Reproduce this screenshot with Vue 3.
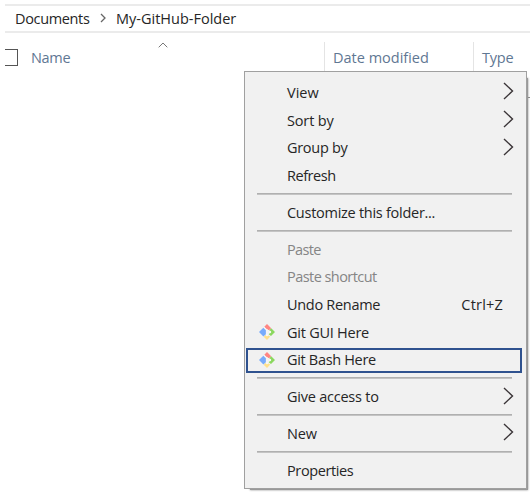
<script setup>
const groups = [
  [
    { label: 'View', arrow: true, ls: 0 },
    { label: 'Sort by', arrow: true, ls: -0.15 },
    { label: 'Group by', arrow: true, ls: -0.3 },
    { label: 'Refresh', ls: -0.45 },
  ],
  [{ label: 'Customize this folder...', ls: -0.27 }],
  [
    { label: 'Paste', disabled: true, ls: -0.65 },
    { label: 'Paste shortcut', disabled: true, ls: -0.55 },
    { label: 'Undo Rename', shortcut: 'Ctrl+Z', ls: -0.3 },
    { label: 'Git GUI Here', git: true, ls: -0.25 },
    { label: 'Git Bash Here', git: true, active: true, ls: -0.32 },
  ],
  [{ label: 'Give access to', arrow: true, ls: -0.23 }],
  [{ label: 'New', arrow: true, ls: -0.1 }],
  [{ label: 'Properties', ls: -0.38 }],
]
</script>

<template>
  <main class="explorer">
    <nav class="path">
      <span class="docs">Documents</span>
      <svg class="crumb" viewBox="0 0 6 10"><path d="M1 1l4 4-4 4" /></svg>
      <span class="folder">My-GitHub-Folder</span>
    </nav>
    <header class="columns">
      <div class="col name">
        <i class="check"></i><span>Name</span>
        <svg class="sort" viewBox="0 0 10 6"><path d="M.7 5.3L5 1l4.300 4.300" /></svg>
      </div>
      <div class="col date">Date modified</div>
      <div class="col type">Type</div>
    </header>
    <i class="tick"></i>
    <div class="shadow"></div>
    <div class="menu" role="menu">
      <section v-for="(g, i) in groups" :key="i" class="group">
        <div
          v-for="item in g"
          :key="item.label"
          class="row"
          :class="{ disabled: item.disabled, active: item.active }"
          role="menuitem"
        >
          <span class="icon">
            <svg v-if="item.git" viewBox="0 0 16 16">
              <path fill="#ff8583" d="M8 0l4.200 4.200L10 6.300 8.200 5.600 5.300 2.700z" />
              <path fill="#78abfb" d="M4.300 3.700l2.600 2.600v4L4.400 12.400 0 8z" />
              <path fill="#8bd85f" d="M12.200 4.200L16 8l-4 4-2.300-1.800L12 8l-1.700-1.700z" />
              <path fill="#ffe08a" d="M7.300 10.500l4 2L8 16l-3.300-3.300z" />
              <path d="M5 3l3 3v5M8 5.500l3 2.500" fill="none" stroke="#f7f7f4" stroke-width="1" />
              <circle cx="8" cy="11" r="1.200" fill="#f7f7f4" />
              <circle cx="11" cy="8" r="1.200" fill="#f7f7f4" />
            </svg>
          </span>
          <span class="label" :style="{ letterSpacing: item.ls + 'px' }">{{ item.label }}</span>
          <span v-if="item.shortcut" class="keys">{{ item.shortcut }}</span>
          <svg v-if="item.arrow" class="arrow" viewBox="0 0 11 18">
            <path d="M1 1l8.500 8L1 17" />
          </svg>
        </div>
      </section>
    </div>
  </main>
</template>

<style>
body { margin: 0; background: #fff; }
</style>

<style scoped>
.explorer {
  position: relative;
  width: 530px;
  height: 494px;
  overflow: hidden;
  box-sizing: border-box;
  padding: 4px 0 0 5px;
  background: #fff;
  font: 14.5px/20px "Open Sans", "Noto Sans", sans-serif;
  color: #262626;
}
.path {
  display: flex;
  align-items: center;
  box-sizing: border-box;
  height: 29px;
  padding-left: 10px;
  border-top: 2px solid #ebebeb;
  border-bottom: 2px solid #ebebeb;
  white-space: nowrap;
}
.docs { width: 85px; letter-spacing: -0.35px; }
.crumb { width: 6px; height: 10px; margin: -1px 10px 0 0; fill: none; stroke: #666; stroke-width: 1.300; }
.columns { display: flex; height: 50px; color: #5f7793; }
.col { box-sizing: border-box; margin-top: 9px; padding: 6px 0 0 7px; border-left: 1px solid #e4e4e4; white-space: nowrap; }
.name { display: flex; width: 319px; padding-left: 0; border: 0; letter-spacing: -0.3px; }
.date { width: 149px; padding-left: 8px; }
.type { width: 57px; padding-left: 8px; letter-spacing: -0.2px; }
.check { box-sizing: border-box; width: 13px; height: 17px; margin: 1px 13px 0 0; border: 1px solid #555; border-left: 0; }
.sort { width: 10px; height: 6px; margin: -6px 0 0 88px; fill: none; stroke: #777; }
.tick { position: absolute; left: 526px; top: 97px; width: 4px; height: 1px; background: #888; }
.shadow { position: absolute; left: 250px; top: 78px; width: 278px; height: 412px; background: #999; box-shadow: 0 0 2px #888; }
.menu {
  position: absolute;
  left: 244px;
  top: 71px;
  width: 283px;
  height: 418px;
  box-sizing: border-box;
  padding: 6.600px 1px 0;
  border: 1px solid #a0a0a0;
  background: #f1f1f1;
}
.group + .group::before {
  content: "";
  display: block;
  height: 2px;
  margin: 3.400px 13px 3.700px 11px;
  background: linear-gradient(#b0b0b0 50%, #c4c4c4 50%);
}
.row { display: flex; align-items: center; box-sizing: border-box; height: 27.700px; padding: 0 10px 0 13px; }
.icon { width: 16px; height: 16px; margin-right: 12px; }
.icon svg { display: block; width: 16px; height: 16px; }
.label { flex: 1; padding-top: 1px; white-space: nowrap; }
.keys { margin-right: 12px; padding-top: 1px; letter-spacing: 0.2px; }
.disabled { color: #858585; }
.arrow { width: 11px; height: 18px; margin: -2px 1px 0 0; fill: none; stroke: #3b3538; stroke-width: 1.400; }
.active { position: relative; }
.active::after { content: ""; position: absolute; left: 0; top: 2px; width: 276px; height: 25px; box-sizing: border-box; border: 2px solid #2f528f; }
</style>
